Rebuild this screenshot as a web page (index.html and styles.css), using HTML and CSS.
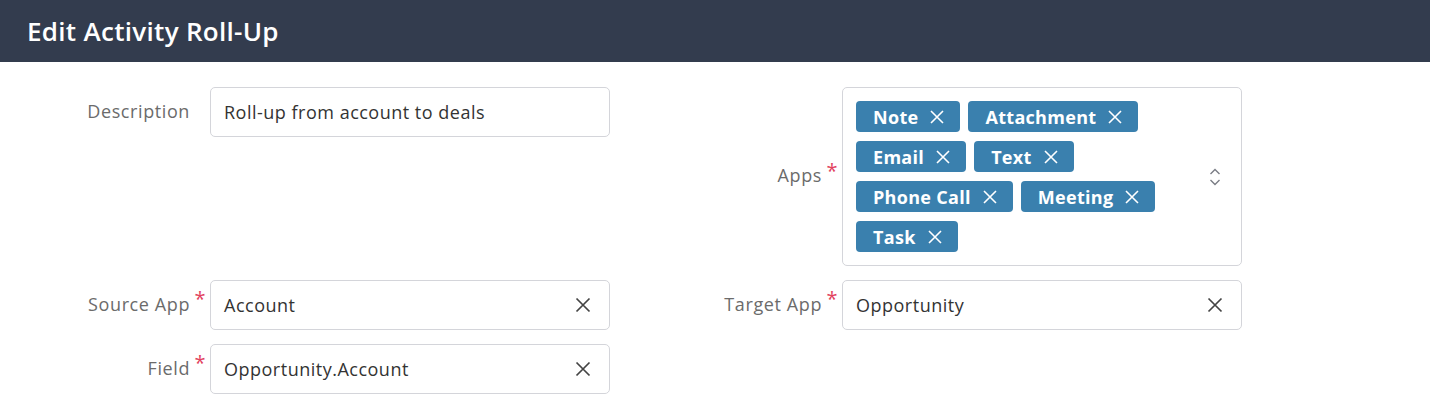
FILE: index.html
```html
<!DOCTYPE html>
<html lang="en">
<head>
<meta charset="utf-8">
<title>Edit Activity Roll-Up</title>
<link rel="stylesheet" href="styles.css">
</head>
<body>
<header class="topbar">
  <h1 class="title">Edit Activity Roll-Up</h1>
</header>
<main class="form">
  <div class="field field-top">
    <label class="label">Description</label>
    <span class="star"></span>
    <div class="input"><span class="value">Roll-up from account to deals</span></div>
  </div>
  <div class="field">
    <label class="label">Apps</label>
    <span class="star">*</span>
    <div class="multi">
      <div class="tags">
        <span class="tag">Note<svg class="tag-x" viewBox="0 0 14 14"><path d="M1 1L13 13M13 1L1 13"/></svg></span>
        <span class="tag">Attachment<svg class="tag-x" viewBox="0 0 14 14"><path d="M1 1L13 13M13 1L1 13"/></svg></span>
        <span class="tag">Email<svg class="tag-x" viewBox="0 0 14 14"><path d="M1 1L13 13M13 1L1 13"/></svg></span>
        <span class="tag">Text<svg class="tag-x" viewBox="0 0 14 14"><path d="M1 1L13 13M13 1L1 13"/></svg></span>
        <span class="tag">Phone Call<svg class="tag-x" viewBox="0 0 14 14"><path d="M1 1L13 13M13 1L1 13"/></svg></span>
        <span class="tag">Meeting<svg class="tag-x" viewBox="0 0 14 14"><path d="M1 1L13 13M13 1L1 13"/></svg></span>
        <span class="tag">Task<svg class="tag-x" viewBox="0 0 14 14"><path d="M1 1L13 13M13 1L1 13"/></svg></span>
      </div>
      <svg class="chevrons" viewBox="0 0 12 20"><path d="M1.5 7L6 2.5L10.5 7M1.5 13L6 17.5L10.5 13"/></svg>
    </div>
  </div>
  <div class="field">
    <label class="label">Source App</label>
    <span class="star">*</span>
    <div class="input"><span class="value">Account</span><svg class="clear" viewBox="0 0 16 16"><path d="M1.5 1.5L14.5 14.5M14.5 1.5L1.5 14.5"/></svg></div>
  </div>
  <div class="field">
    <label class="label">Target App</label>
    <span class="star">*</span>
    <div class="input"><span class="value">Opportunity</span><svg class="clear" viewBox="0 0 16 16"><path d="M1.5 1.5L14.5 14.5M14.5 1.5L1.5 14.5"/></svg></div>
  </div>
  <div class="field">
    <label class="label">Field</label>
    <span class="star">*</span>
    <div class="input"><span class="value">Opportunity.Account</span><svg class="clear" viewBox="0 0 16 16"><path d="M1.5 1.5L14.5 14.5M14.5 1.5L1.5 14.5"/></svg></div>
  </div>
</main>
</body>
</html>
```
FILE: styles.css
```css
* { box-sizing: border-box; }
html, body { margin: 0; padding: 0; background: #ffffff; }
body {
  font-family: "Open Sans", Lato, "Liberation Sans", sans-serif;
  color: #333;
}
.topbar {
  height: 62px;
  background: #333c4e;
  display: flex;
  align-items: center;
  padding: 0 27px;
}
.title {
  margin: 0;
  color: #fff;
  font-size: 26px;
  font-weight: 600;
  letter-spacing: 0.3px;
}
.form {
  display: grid;
  grid-template-columns: 610px 610px;
  column-gap: 22px;
  row-gap: 14px;
  padding-top: 25px;
  align-items: start;
}
.field {
  display: flex;
  align-items: center;
}
.label {
  width: 190px;
  text-align: right;
  font-size: 18px;
  letter-spacing: 0.6px;
  color: #6b6b6b;
  padding-bottom: 3px;
}
.star {
  width: 20px;
  text-align: center;
  color: #e2435e;
  font-size: 20px;
  line-height: 1;
  margin-bottom: 12px;
}
.input {
  width: 400px;
  height: 50px;
  border: 1px solid #d4d5da;
  border-radius: 5px;
  display: flex;
  align-items: center;
  padding: 0 18px 0 13px;
  font-size: 18px;
  letter-spacing: 0.5px;
  color: #333;
}
.value { flex: 1; }
.clear {
  width: 16px;
  height: 16px;
  fill: none;
  stroke: #444;
  stroke-width: 1.7;
}
.multi {
  width: 400px;
  border: 1px solid #d4d5da;
  border-radius: 5px;
  display: flex;
  align-items: center;
  padding: 13px 12px 13px 13px;
}
.tags {
  flex: 1;
  display: flex;
  flex-wrap: wrap;
  gap: 9px 8px;
  padding-right: 30px;
}
.tag {
  display: inline-flex;
  align-items: center;
  height: 31px;
  padding: 0 16px 0 17px;
  background: #3a80ae;
  color: #fff;
  border-radius: 4px;
  font-size: 18px;
  font-weight: 700;
  letter-spacing: 0.3px;
}
.tag-x {
  width: 14px;
  height: 14px;
  margin-left: 12px;
  fill: none;
  stroke: #fff;
  stroke-width: 1.6;
}
.chevrons {
  width: 12px;
  height: 20px;
  fill: none;
  stroke: #7a7d85;
  stroke-width: 1.4;
  margin-right: 8px;
}
```
